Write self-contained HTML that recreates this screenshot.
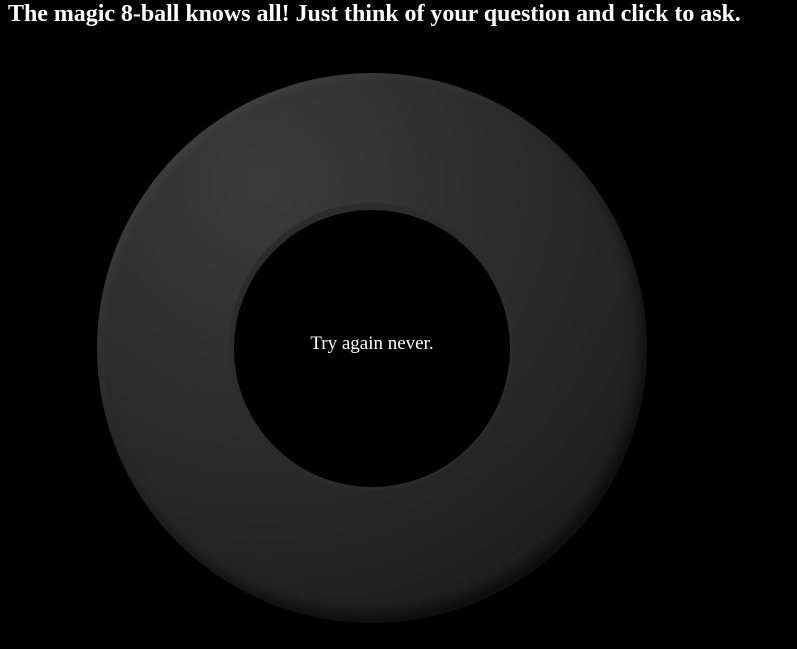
<!DOCTYPE html>
<html><head><style>
html,body{margin:0;padding:0;background:#000;width:797px;height:649px;overflow:hidden}
h1{position:absolute;left:8px;top:0;margin:0;font:bold 24px "Liberation Serif",serif;color:#fff;line-height:28px;white-space:nowrap;letter-spacing:-0.04px}
.ball{position:absolute;left:97px;top:73px;width:550px;height:550px;border-radius:50%;
background:radial-gradient(circle at 30% 20%,#3c3c3c 0%,#2e2e2e 35%,#262626 60%,#1c1c1c 85%,#141414 100%);
box-shadow:inset -6px -10px 12px rgba(0,0,0,0.55),inset 4px 4px 8px rgba(255,255,255,0.05)}
.win{position:absolute;left:132px;top:130px;width:284px;height:287px;border-radius:50%;
background:radial-gradient(circle at 50% 45%,#2c2c2c 0%,#2c2c2c 70%,#222 100%)}
.inner{position:absolute;left:5px;top:7px;width:276px;height:277px;border-radius:50%;background:#000;
display:flex;align-items:center;justify-content:center;color:#fff;font:19px "Liberation Serif",serif}
</style></head><body>
<h1>The magic 8-ball knows all! Just think of your question and click to ask.</h1>
<div class="ball"><div class="win"><div class="inner"><span style="margin-top:-10px">Try again never.</span></div></div></div>
</body></html>
